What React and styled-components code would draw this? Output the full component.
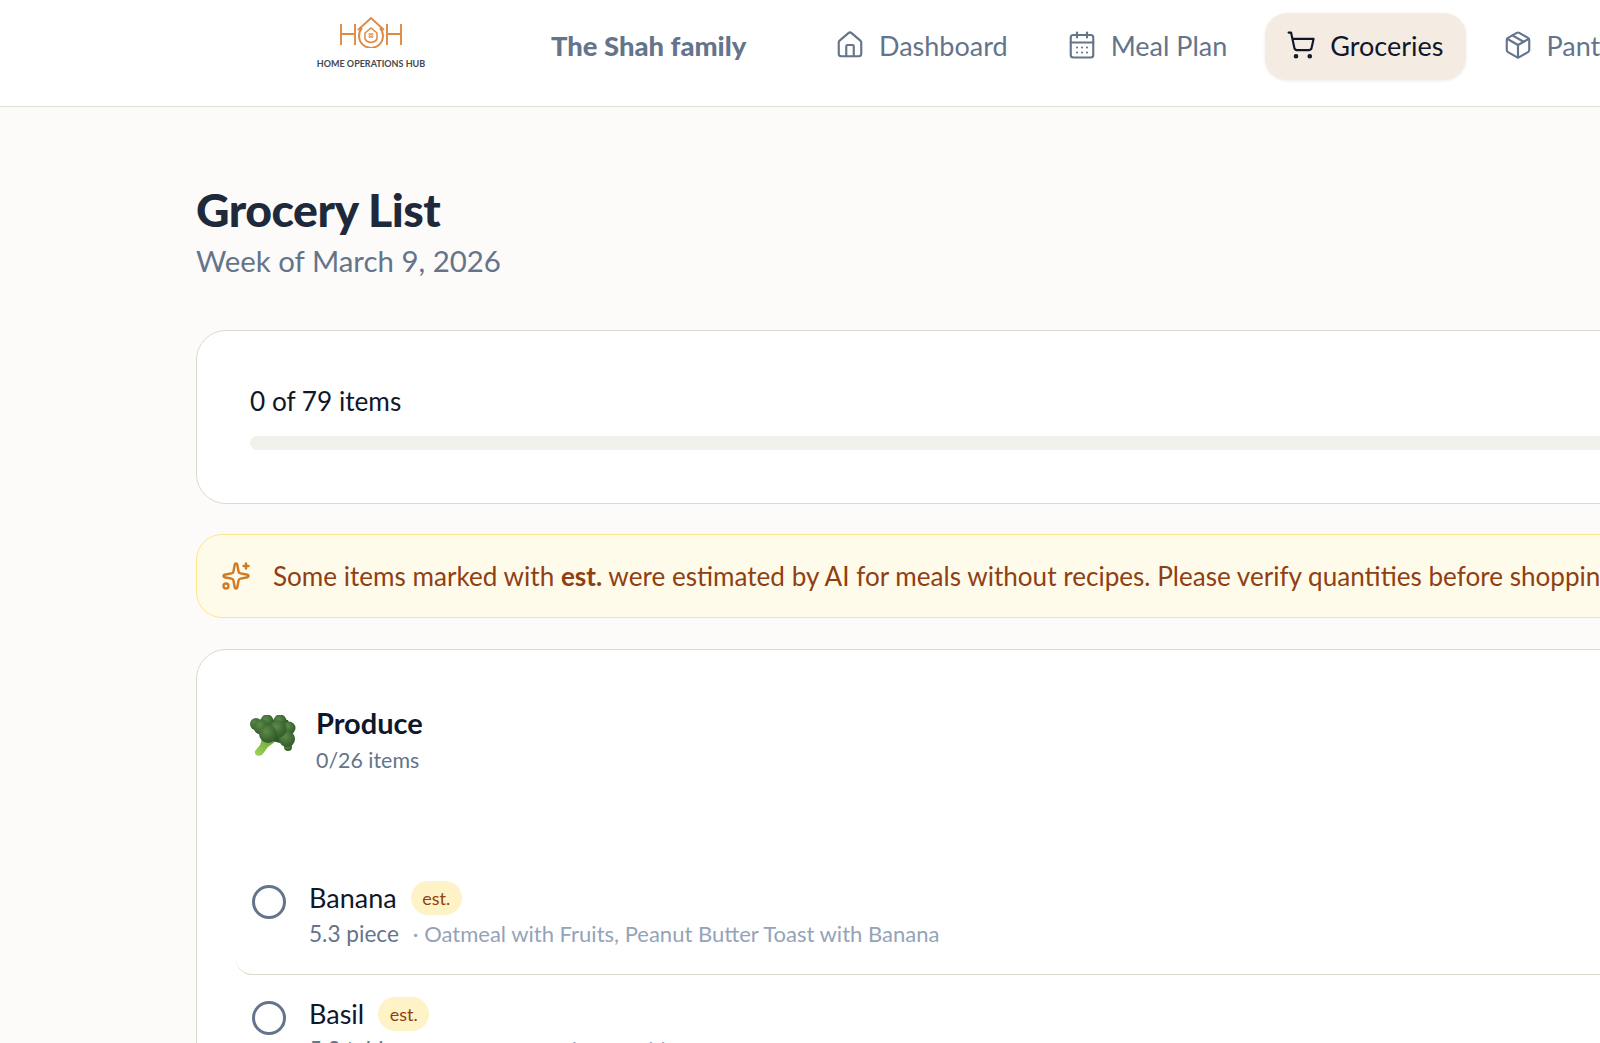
import React from "react";
import styled, { createGlobalStyle } from "styled-components";
import { House, CalendarDays, ShoppingCart, Package, Sparkles } from "lucide-react";

const GlobalStyle = createGlobalStyle`
  html, body {
    margin: 0;
    padding: 0;
    height: 100%;
    overflow: hidden;
    background: #fcfbf9;
  }
  body {
    font-family: "Lato", "Open Sans", sans-serif;
    color: #0f172a;
  }
  * {
    box-sizing: border-box;
  }
`;

const Page = styled.div`
  width: 1900px;
  height: 1043px;
  overflow: hidden;
`;

const Header = styled.header`
  display: flex;
  align-items: center;
  height: 107px;
  padding: 0 0 14px 316px;
  background: #fff;
  border-bottom: 1.5px solid #e5e2d9;
`;

const LogoWrap = styled.div`
  display: flex;
  flex-direction: column;
  align-items: center;
  width: 110px;
  margin-top: -7px;
`;

const LogoText = styled.span`
  margin-top: 10px;
  font-size: 9px;
  font-weight: 700;
  white-space: nowrap;
  color: #44484e;
`;

const FamilyName = styled.div`
  margin: -2px 0 0 125px;
  width: 263px;
  font-size: 27.4px;
  font-weight: 900;
  color: #64748b;
`;

const Nav = styled.nav`
  display: flex;
  align-items: center;
  gap: 16px;
`;

const NavItem = styled.a`
  display: flex;
  align-items: center;
  gap: 14px;
  height: 67px;
  padding: 0 22px 2px 21px;
  border-radius: 22px;
  font-size: 27px;
  white-space: nowrap;
  color: ${(p) => (p.$active ? "#0f172a" : "#64748b")};
  background: ${(p) => (p.$active ? "#f4ece3" : "transparent")};
  box-shadow: ${(p) => (p.$active ? "0 1px 3px rgba(120, 100, 70, 0.12)" : "none")};
`;

const Main = styled.main`
  padding: 74px 0 0 196px;
  width: 1900px;
`;

const Title = styled.h1`
  margin: 0;
  font-size: 46.4px;
  line-height: 56px;
  font-weight: 900;
  letter-spacing: -0.5px;
  color: #1e293b;
`;

const Subtitle = styled.p`
  margin: 4px 0 0;
  font-size: 29.4px;
  line-height: 40px;
  color: #64748b;
`;

const Card = styled.section`
  background: #fff;
  border: 1.5px solid #dbdacc;
  border-radius: 30px;
`;

const ProgressCard = styled(Card)`
  margin-top: 49px;
  height: 174px;
  padding: 53px 53px 0;
`;

const ProgressLabel = styled.div`
  font-size: 26.2px;
  line-height: 34px;
  color: #0f172a;
`;

const ProgressTrack = styled.div`
  margin-top: 18px;
  height: 14px;
  border-radius: 7px;
  background: #f1f1ec;
`;

const Notice = styled.div`
  display: flex;
  align-items: center;
  gap: 22px;
  height: 84px;
  margin-top: 30px;
  padding-left: 24px;
  background: #fffbeb;
  border: 1.5px solid #fde68a;
  border-radius: 26px;
  font-size: 26.1px;
  white-space: nowrap;
  color: #8f3f12;

  svg {
    flex: none;
    color: #d07a22;
  }
  b {
    font-weight: 700;
  }
`;

const ListCard = styled(Card)`
  margin-top: 31px;
  height: 600px;
  padding: 53px 39px 0;
`;

const CategoryHead = styled.div`
  display: flex;
  align-items: flex-start;
  gap: 20px;
  padding-left: 14px;
  margin-bottom: 83px;
`;

const EmojiSlot = styled.div`
  flex: none;
  width: 46px;
  padding-top: 12px;
`;

const CategoryName = styled.div`
  font-size: 29px;
  line-height: 40px;
  font-weight: 700;
  color: #0f172a;
`;

const CategoryCount = styled.div`
  margin-top: 1px;
  font-size: 21.4px;
  line-height: 32px;
  color: #64748b;
`;

const Row = styled.div`
  display: flex;
  align-items: flex-start;
  gap: 23px;
  height: 116px;
  padding: 20px 16px;
  border-bottom: 1.5px solid #dbdacc;
  border-radius: 16px;
`;

const Check = styled.span`
  flex: none;
  width: 34px;
  height: 34px;
  margin-top: 6px;
  border: 3px solid #64748b;
  border-radius: 50%;
`;

const NameLine = styled.div`
  display: flex;
  align-items: center;
  gap: 14px;
  height: 36px;
  font-size: 27px;
  color: #0f172a;
`;

const EstBadge = styled.span`
  display: flex;
  align-items: center;
  justify-content: center;
  width: 51px;
  height: 34px;
  margin-top: 1px;
  border-radius: 17px;
  font-size: 18px;
  color: #92400e;
  background: #fef3c7;
`;

const SubLine = styled.div`
  margin-top: 3px;
  font-size: 22.6px;
  line-height: 32px;
  white-space: nowrap;
  color: #64748b;

  span {
    margin-left: 14px;
    font-size: 22px;
    color: #94a3b8;
  }
`;

function Logo() {
  return (
    <svg width="64" height="32" viewBox="0 0 64 32" fill="none" stroke="#dd8a45" strokeWidth="1.9">
      <path d="M2 8v21M16 8v21M2 18h13" />
      <path d="M48 8v21M62 8v21M49 18h13" />
      <path d="M19 14 32 2l13 12" />
      <path d="M23 12a12 12 0 1 0 18 0" />
      <path d="M26 17l6-5 6 5v6a7 7 0 0 1-12 0z" strokeWidth="1.5" />
      <path d="M30 17.5h1.5v1.5H30zM32.5 17.5H34v1.5h-1.5zM30 20h1.5v1.5H30zM32.5 20H34v1.5h-1.5z" strokeWidth="0.8" />
    </svg>
  );
}

function Broccoli() {
  const florets = [
    [38, 32, 4], [6, 9, 6], [17, 6, 6.5], [30, 6, 6.5], [39, 13, 6.5],
    [11, 12, 7.5], [37, 24, 8], [28, 14, 8.5], [18, 19, 9],
  ];
  return (
    <svg width="46" height="42" viewBox="0 0 46 42">
      <defs>
        <radialGradient id="floret" cx="40%" cy="35%" r="70%">
          <stop offset="0%" stopColor="#5d8a48" />
          <stop offset="100%" stopColor="#2e5828" />
        </radialGradient>
        <linearGradient id="stalk" x1="0" y1="1" x2="1" y2="0">
          <stop offset="0%" stopColor="#a2d655" />
          <stop offset="100%" stopColor="#5f9a38" />
        </linearGradient>
      </defs>
      <path d="M13 21 26 26 18 32 12 40C8 42 4 40 5 36L10 30z" fill="url(#stalk)" />
      <path d="M6 5 38 5 43 20 38 30 26 27 12 22z" fill="#2e5828" />
      {florets.map(([cx, cy, r]) => (
        <circle key={`${cx}-${cy}`} cx={cx} cy={cy} r={r} fill="url(#floret)" />
      ))}
    </svg>
  );
}

const navItems = [
  { label: "Dashboard", Icon: House },
  { label: "Meal Plan", Icon: CalendarDays },
  { label: "Groceries", Icon: ShoppingCart, active: true },
  { label: "Pantry", Icon: Package },
];

const groceries = [
  { name: "Banana", qty: "5.3 piece", meals: "· Oatmeal with Fruits, Peanut Butter Toast with Banana" },
  { name: "Basil", qty: "5.3 tablespoon", meals: "· Pesto and Vegetable Soup" },
];

export default function App() {
  return (
    <Page>
      <GlobalStyle />
      <Header>
        <LogoWrap>
          <Logo />
          <LogoText>HOME OPERATIONS HUB</LogoText>
        </LogoWrap>
        <FamilyName>The Shah family</FamilyName>
        <Nav>
          {navItems.map(({ label, Icon, active }) => (
            <NavItem key={label} $active={active}>
              <Icon size={30} strokeWidth={1.7} />
              {label}
            </NavItem>
          ))}
        </Nav>
      </Header>
      <Main>
        <Title>Grocery List</Title>
        <Subtitle>Week of March 9, 2026</Subtitle>
        <ProgressCard>
          <ProgressLabel>0 of 79 items</ProgressLabel>
          <ProgressTrack />
        </ProgressCard>
        <Notice>
          <Sparkles size={30} strokeWidth={1.9} />
          <span>
            Some items marked with <b>est.</b> were estimated by AI for meals without recipes. Please verify quantities before shopping.
          </span>
        </Notice>
        <ListCard>
          <CategoryHead>
            <EmojiSlot>
              <Broccoli />
            </EmojiSlot>
            <div>
              <CategoryName>Produce</CategoryName>
              <CategoryCount>0/26 items</CategoryCount>
            </div>
          </CategoryHead>
          {groceries.map((item) => (
            <Row key={item.name}>
              <Check />
              <div>
                <NameLine>
                  {item.name}
                  <EstBadge>est.</EstBadge>
                </NameLine>
                <SubLine>
                  {item.qty}
                  <span>{item.meals}</span>
                </SubLine>
              </div>
            </Row>
          ))}
        </ListCard>
      </Main>
    </Page>
  );
}
